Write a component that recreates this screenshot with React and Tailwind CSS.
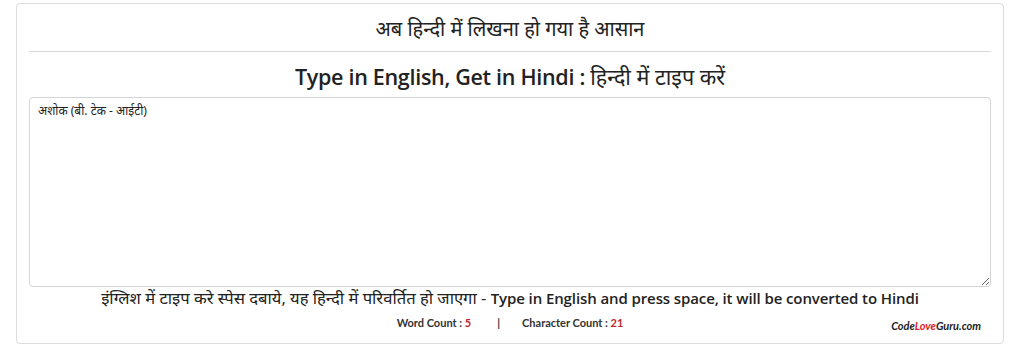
export default function App() {
  const sans = { fontFamily: '"Open Sans", "Noto Sans", "Noto Sans Devanagari", sans-serif' };
  return (
    <div className="w-[1024px] h-[355px] bg-white" style={sans}>
      <div className="ml-[16px] mt-[3px] w-[988px] h-[341px] border border-[#dcdcdc] rounded-[4px] px-[12px] flex flex-col">
        <h1 className="text-center text-[20px] leading-[28px] text-[#222] pt-[11px] font-normal">अब हिन्दी में लिखना हो गया है आसान</h1>
        <hr className="mt-[8px] border-t border-[#d6d6d6]" />
        <h2 className="text-center text-[21.5px] leading-[30px] text-[#222] font-semibold mt-[10px] tracking-[-0.3px]">
          Type in English, Get in Hindi : <span className="font-normal tracking-normal">हिन्दी में टाइप करें</span>
        </h2>
        <textarea
          className="mt-[5px] w-full h-[190px] border border-[#d4d4d4] rounded-[4px] px-[8px] py-[4px] text-[12px] text-[#222] resize-y outline-none"
          defaultValue="अशोक (बी. टेक - आईटी)"
          style={{ fontFamily: '"Noto Sans", "Liberation Sans", sans-serif' }}
        />
        <p className="text-center text-[16.6px] leading-[20px] text-[#222] mt-[1px]">
          इंग्लिश में टाइप करे स्पेस दबाये, यह हिन्दी में परिवर्तित हो जाएगा - <span className="font-semibold text-[15px] tracking-[-0.1px]">Type in English and press space, it will be converted to Hindi</span>
        </p>
        <div className="grid grid-cols-[1fr_auto_1fr] text-[11px] font-bold text-[#333]" style={{ fontFamily: 'Lato, "Liberation Sans", sans-serif' }}>
          <div />
          <div className="mt-[4px] flex items-center">
            <span>Word Count : <span className="text-[#c0282d]">5</span></span>
            <span className="ml-[26px] mr-[22px]">|</span>
            <span>Character Count : <span className="text-[#c0282d]">21</span></span>
          </div>
          <div className="flex justify-end pr-[10px] pt-[10px] italic text-[11px] text-[#222]">
            <span>Code<span className="text-[#e11d2a]">Love</span>Guru.com</span>
          </div>
        </div>
      </div>
    </div>
  );
}
